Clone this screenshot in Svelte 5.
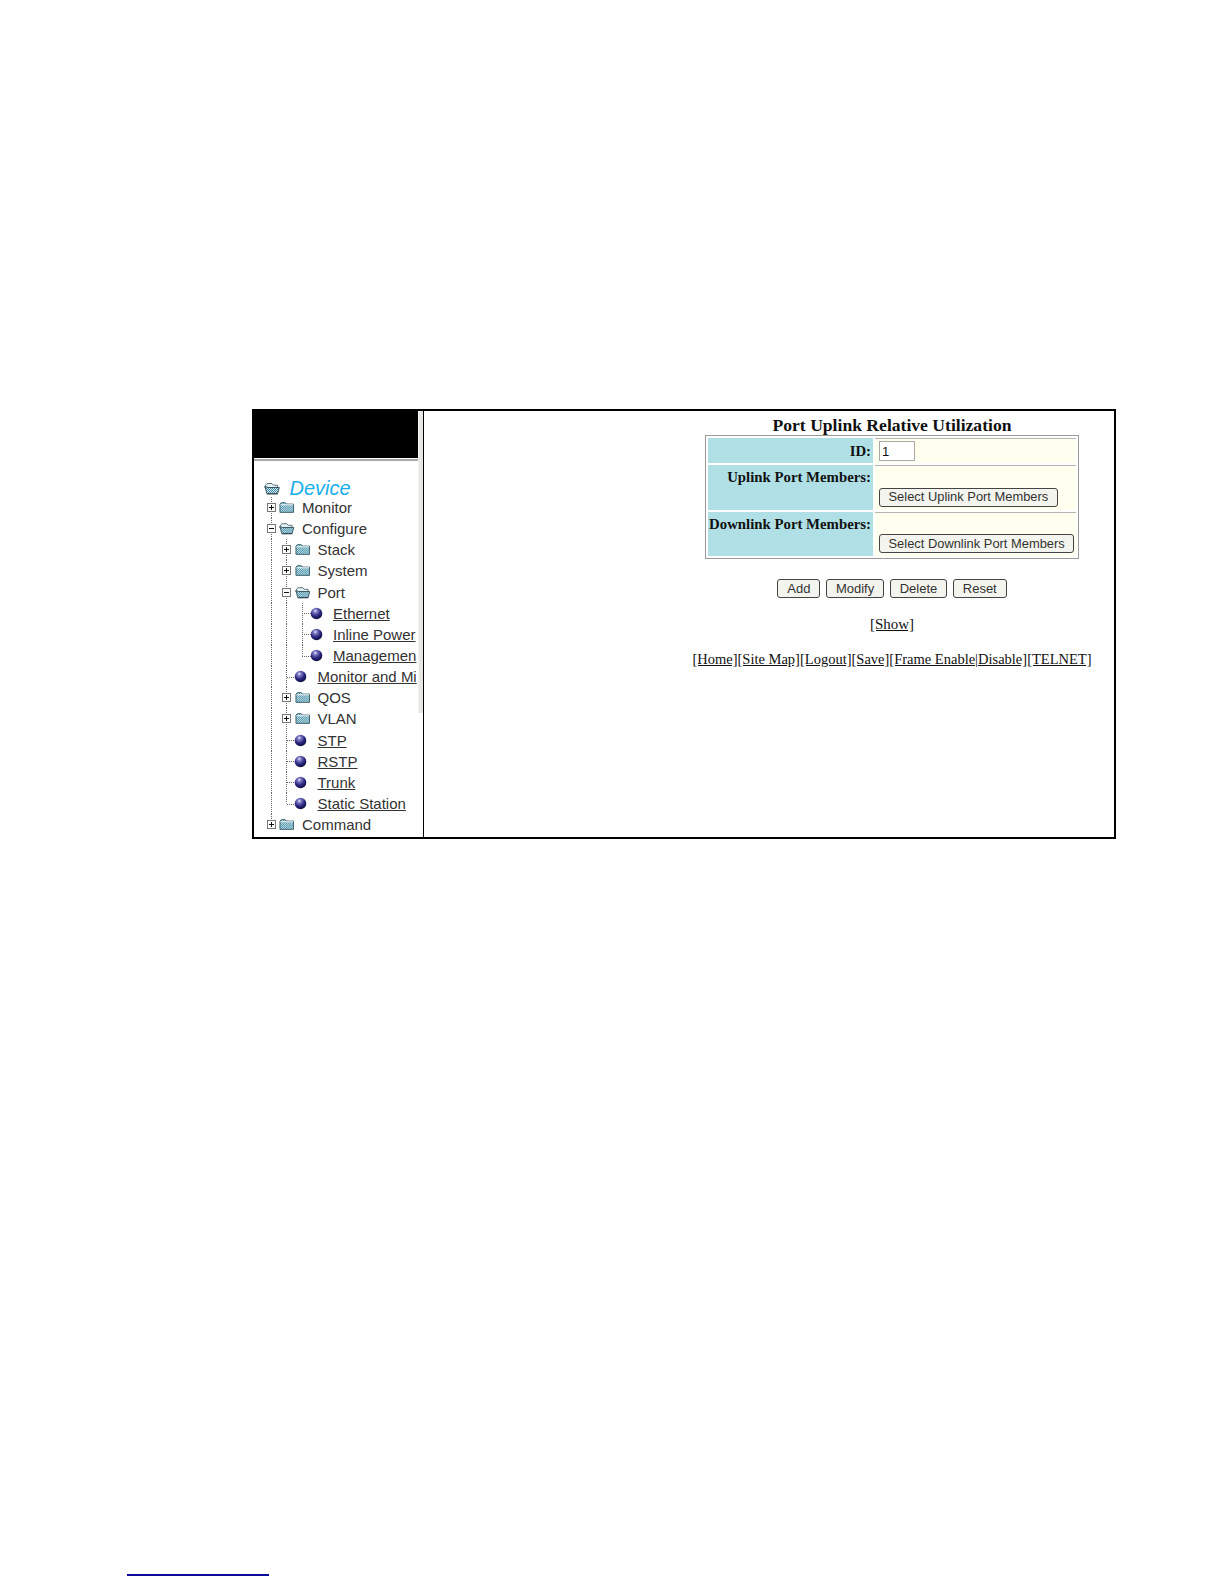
<script>
  // Tree rows: guides = which indent columns carry a dotted line
  const rows = [
    { label: "Monitor", icon: "closed", toggle: "plus", guides: [] },
    { label: "Configure", icon: "open", toggle: "minus", guides: [] },
    { label: "Stack", icon: "closed", toggle: "plus", guides: [1] },
    { label: "System", icon: "closed", toggle: "plus", guides: [1] },
    { label: "Port", icon: "open", toggle: "minus", guides: [1] },
    { label: "Ethernet", icon: "ball", guides: [1, 1], link: true },
    { label: "Inline Power", icon: "ball", guides: [1, 1], link: true },
    { label: "Managemen", icon: "ball", guides: [1, 1], link: true, last: true },
    { label: "Monitor and Mi", icon: "ball", guides: [1], link: true },
    { label: "QOS", icon: "closed", toggle: "plus", guides: [1] },
    { label: "VLAN", icon: "closed", toggle: "plus", guides: [1] },
    { label: "STP", icon: "ball", guides: [1], link: true },
    { label: "RSTP", icon: "ball", guides: [1], link: true },
    { label: "Trunk", icon: "ball", guides: [1], link: true },
    { label: "Static Station", icon: "ball", guides: [1], link: true, last: true },
    { label: "Command", icon: "closed", toggle: "plus", guides: [], last: true }
  ];

  const actions = ["Add", "Modify", "Delete", "Reset"];
  const navLinks = ["Home", "Site Map", "Logout", "Save", "Frame Enable|Disable", "TELNET"];
</script>

{#snippet folder(open, id)}
  <svg class="folder" width="16" height="13" viewBox="0 0 16 13">
    <defs>
      <pattern {id} width="2" height="2" patternUnits="userSpaceOnUse">
        <rect width="2" height="2" fill="#d6e8ee" />
        <rect width="1" height="1" fill="#3a8aa4" />
        <rect x="1" y="1" width="1" height="1" fill="#3a8aa4" />
      </pattern>
    </defs>
    {#if open}
      <path d="M1 4 L3 1.5 H8 L9.5 3.2 H13.5 V6 H1 Z" fill="#e4f0f3" stroke="#4a6670" stroke-width="0.9" />
      <path d="M1 4.5 L4 5.5 H15.3 L13.6 11.6 H2.8 Z" fill="url(#{id})" stroke="#2f4a55" stroke-width="0.9" />
      <path d="M3 12 H13.5" stroke="#2a3f48" stroke-width="0.9" />
    {:else}
      <path d="M1 3 L2.5 1.5 H6.5 L8 3 H15 V11.5 H1 Z" fill="url(#{id})" stroke="#3a5f6c" stroke-width="1" />
      <path d="M1.5 3.7 H14.5" stroke="#f6fbfc" stroke-width="1" />
    {/if}
  </svg>
{/snippet}

{#snippet ball(id)}
  <svg class="ball" width="13" height="13" viewBox="0 0 13 13">
    <defs>
      <radialGradient {id} cx="0.4" cy="0.28" r="0.75">
        <stop offset="0" stop-color="#e6e6f8" />
        <stop offset="0.22" stop-color="#7c78c4" />
        <stop offset="0.6" stop-color="#2a2780" />
        <stop offset="1" stop-color="#0e0c38" />
      </radialGradient>
    </defs>
    <circle cx="6.5" cy="6.5" r="5.8" fill="url(#{id})" />
  </svg>
{/snippet}

<div class="frame">
  <aside class="sidebar">
    <div class="tree-col">
      <div class="banner"></div>
      <div class="tree">
        <div class="root">
          <span class="root-icon">{@render folder(true, "f-root")}</span>
          <span class="root-label">Device</span>
        </div>
        {#each rows as row, i}
          <div class="row">
            {#each row.guides as _}
              <span class="cell guide"></span>
            {/each}
            {#if row.toggle}
              <span class="cell guide" class:end={row.last}>
                <span class="toggle">
                  <span class="bar"></span>
                  {#if row.toggle === "plus"}<span class="bar vert"></span>{/if}
                </span>
              </span>
            {:else}
              <span class="cell guide branch" class:end={row.last}></span>
            {/if}
            <span class="cell icon">
              {#if row.icon === "ball"}
                {@render ball("b" + i)}
              {:else}
                {@render folder(row.icon === "open", "f" + i)}
              {/if}
            </span>
            <span class="label" class:link={row.link}>{row.label}</span>
          </div>
        {/each}
      </div>
    </div>
    <div class="strip"></div>
  </aside>

  <main class="content">
    <h2>Port Uplink Relative Utilization</h2>
    <table>
      <tbody>
        <tr class="short">
          <th>ID:</th>
          <td><input value="1" /></td>
        </tr>
        <tr>
          <th>Uplink Port Members:</th>
          <td><button class="select">Select Uplink Port Members</button></td>
        </tr>
        <tr>
          <th>Downlink Port Members:</th>
          <td><button class="select">Select Downlink Port Members</button></td>
        </tr>
      </tbody>
    </table>

    <div class="actions">
      {#each actions as action}
        <button>{action}</button>
      {/each}
    </div>

    <p class="show"><a href="#show">[Show]</a></p>

    <p class="nav">
      {#each navLinks as link}<a href="#nav">[{link}]</a>{/each}
    </p>
  </main>
</div>

<div class="footnote-rule"></div>

<style>
  :global(body) {
    margin: 0;
    background: #fff;
  }
  .frame {
    display: flex;
    box-sizing: border-box;
    width: 864px;
    height: 430px;
    margin: 409px 0 0 252px;
    border: 2px solid #000;
    background: #fff;
  }
  .sidebar {
    display: flex;
    flex: none;
    width: 170px;
    height: 426px;
    border-right: 1.5px solid #000;
    box-sizing: border-box;
    overflow: hidden;
    font-family: "Liberation Sans", Arial, sans-serif;
    font-size: 15px;
    color: #333;
  }
  .tree-col {
    flex: none;
    width: 164px;
    overflow: hidden;
  }
  .strip {
    flex: none;
    width: 4.5px;
    height: 302px;
    background: #e6e6e2;
    border-left: 1px solid #f4f4f0;
    box-sizing: border-box;
  }
  .banner {
    height: 48px;
    background: #000;
    border-bottom: 2px solid #a8a8a8;
    box-shadow: inset 0 -1px 0 #fff;
  }
  .tree {
    padding: 18px 0 0 9.5px;
  }
  .root {
    display: flex;
    align-items: center;
    height: 18px;
  }
  .root-icon {
    flex: none;
    width: 26px;
    display: flex;
    justify-content: flex-start;
  }
  .root-label {
    font-size: 20px;
    font-style: italic;
    color: #19aeea;
  }
  .row {
    display: flex;
    align-items: center;
    height: 21.15px;
    white-space: nowrap;
  }
  .cell {
    position: relative;
    flex: none;
    width: 15.5px;
    height: 100%;
    display: flex;
    align-items: center;
    justify-content: center;
  }
  .guide {
    background: repeating-linear-gradient(to bottom, #666 0 1px, transparent 1px 2px) no-repeat center top / 1px 100%;
  }
  .guide.end {
    background-size: 1px 50%;
  }
  .branch::after {
    content: "";
    position: absolute;
    left: 50%;
    right: -1px;
    top: 50%;
    border-top: 1px dotted #666;
  }
  .toggle {
    position: relative;
    width: 9px;
    height: 9px;
    box-sizing: border-box;
    border: 1px solid #777;
    background: #fff;
  }
  .bar {
    position: absolute;
    left: 1px;
    right: 1px;
    top: 3px;
    height: 1px;
    background: #111;
  }
  .bar.vert {
    left: 3px;
    right: 3px;
    top: 1px;
    width: 1px;
    height: 5px;
  }
  .icon {
    justify-content: flex-start;
  }
  .folder {
    display: block;
  }
  .ball {
    display: block;
    margin-left: -0.5px;
  }
  .label {
    margin-left: 7.5px;
  }
  .link {
    text-decoration: underline;
  }
  .content {
    flex: 1;
    min-width: 0;
    box-sizing: border-box;
    padding-left: 246px;
    font-family: "Liberation Serif", "Times New Roman", serif;
    font-size: 15px;
    color: #111;
    text-align: center;
  }
  h2 {
    margin: 0;
    padding-top: 4px;
    font-size: 17.6px;
    line-height: 20px;
    font-weight: bold;
  }
  table {
    margin: 0 auto;
    width: 374px;
    box-sizing: border-box;
    border: 1px solid #9a9a9a;
    border-spacing: 2px;
    background: #fff;
    table-layout: fixed;
  }
  th {
    width: 165px;
    height: 44.5px;
    padding: 2px 2px 0 0;
    box-sizing: border-box;
    background: #b0e0e6;
    text-align: right;
    vertical-align: top;
    font-size: 14.8px;
    line-height: 20px;
    font-weight: bold;
    white-space: nowrap;
  }
  td {
    padding: 0 2px 0 4px;
    background: #fffff0;
    border-top: 1px solid #b4b4b4;
    text-align: left;
    vertical-align: bottom;
    box-sizing: border-box;
  }
  .short th {
    height: 25px;
    padding-top: 0;
    vertical-align: middle;
  }
  .short td {
    vertical-align: middle;
  }
  input {
    display: block;
    box-sizing: border-box;
    width: 36px;
    height: 20px;
    padding: 0 2px;
    border: 1px solid #a8a8a8;
    background: #fff;
    font-family: "Liberation Sans", Arial, sans-serif;
    font-size: 13px;
    color: #111;
  }
  button {
    box-sizing: border-box;
    height: 19px;
    padding: 0 9px;
    border: 1px solid #444;
    border-radius: 3px;
    background: #f4f4ee;
    font-family: "Liberation Sans", Arial, sans-serif;
    font-size: 13px;
    line-height: 16px;
    color: #333;
    white-space: nowrap;
  }
  .select {
    display: block;
    margin-bottom: 3px;
    padding: 0 8.5px;
    font-size: 12.9px;
  }
  .actions {
    display: flex;
    justify-content: center;
    gap: 5.5px;
    margin-top: 20px;
  }
  .show {
    margin: 16px 0 0;
    line-height: 20px;
  }
  .nav {
    margin: 15px 0 0;
    font-size: 14.5px;
    line-height: 20px;
    white-space: nowrap;
  }
  a {
    color: #111;
    text-decoration: underline;
  }
  .footnote-rule {
    width: 142px;
    height: 2px;
    margin: 735px 0 0 127px;
    background: #0a0a9c;
  }
</style>
